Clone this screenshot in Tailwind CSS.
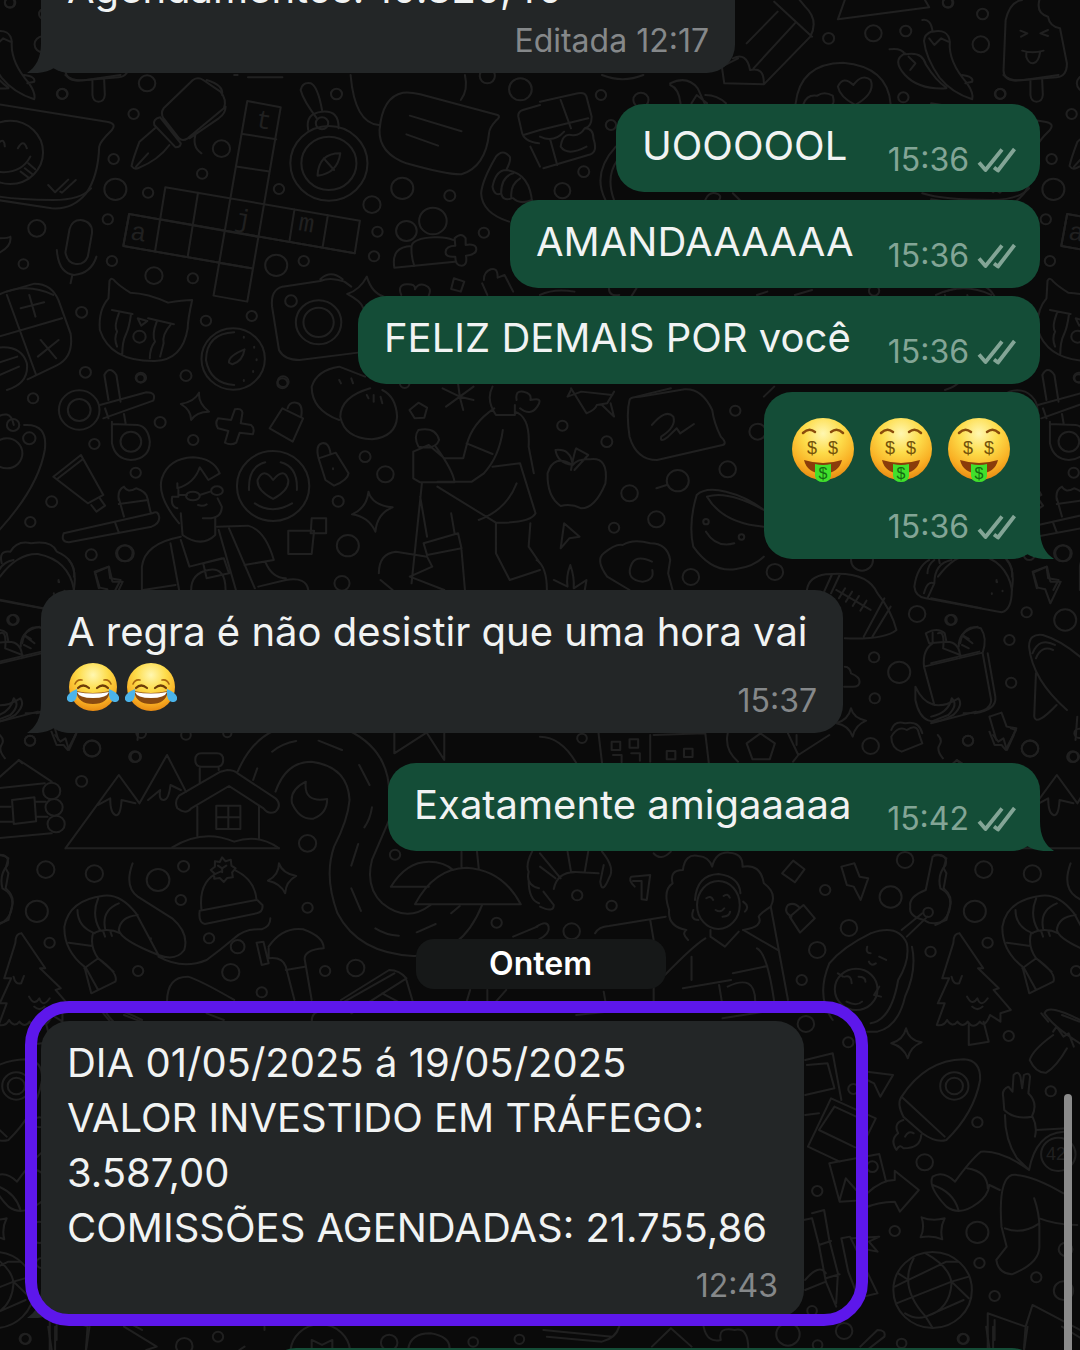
<!DOCTYPE html>
<html lang="pt-BR">
<head>
    <meta charset="UTF-8">
    <meta name="viewport" content="width=device-width, initial-scale=1.0">
    <title>Conversa</title>
    <script src="https://cdn.jsdelivr.net/npm/@tailwindcss/browser@4"></script>
</head>
<body class="bg-[#0a0a0a] font-['Inter','Liberation_Sans',sans-serif]">

    <!-- Shared icons -->
    <svg class="absolute w-0 h-0" aria-hidden="true">
        <defs>
            <radialGradient id="face" cx="50%" cy="25%" r="78%">
                <stop offset="0" stop-color="#fff7b0"/>
                <stop offset="0.4" stop-color="#fddc4a"/>
                <stop offset="0.75" stop-color="#f9b024"/>
                <stop offset="1" stop-color="#e58410"/>
            </radialGradient>
            <symbol id="checks" viewBox="0 0 39 26">
                <path d="M2 15.500L8.500 23 25 2.500M17 20.500L21 23.500 37.500 2" fill="none" stroke="currentColor" stroke-width="3.800" stroke-linejoin="round" stroke-linecap="butt"/>
            </symbol>
            <symbol id="tail-right" viewBox="-34 -32 48 32">
                <path d="M0-30C0-15 5-6 14 0C3 1-7-1-13-5C-18-2-24 0-33 0V-30Z" fill="currentColor"/>
            </symbol>
            <symbol id="tail-left" viewBox="-14 -32 48 32">
                <path d="M0-30C0-15-5-6-14 0C-3 1 7-1 13-5C18-2 24 0 33 0V-30Z" fill="currentColor"/>
            </symbol>
            <symbol id="money" viewBox="0 0 62 64">
                <circle cx="31" cy="31" r="31" fill="url(#face)"/>
                <path d="M11 15Q17 9 23 14M39 14Q45 9 51 15" fill="none" stroke="#8a4d0c" stroke-width="2.500" stroke-linecap="round"/>
                <g fill="#74520a" font-family="Liberation Sans" font-size="18" text-anchor="middle">
                    <text x="20" y="36">$</text>
                    <text x="41" y="36">$</text>
                </g>
                <path d="M12 42Q31 48 50 42Q47 55 31 56Q15 55 12 42Z" fill="#8a3c0b"/>
                <path d="M23 46Q31 48 39 46V58Q38 64 31 64T23 58Z" fill="#41e02c"/>
                <text x="31" y="61" fill="#146b12" font-family="Liberation Sans" font-size="16" text-anchor="middle">$</text>
            </symbol>
            <symbol id="joy" viewBox="0 0 52 48">
                <circle cx="26" cy="24" r="24" fill="url(#face)"/>
                <path d="M8 21Q10 16 15 17M37 17Q42 16 44 21" fill="none" stroke="#a9660f" stroke-width="1.600" stroke-linecap="round"/>
                <path d="M11 25Q16 20 22 25M30 25Q36 20 41 25" fill="none" stroke="#6e3d08" stroke-width="2.200" stroke-linecap="round"/>
                <path d="M9 28Q26 32 43 28Q41 41 26 41T9 28Z" fill="#8a4a10"/>
                <path d="M10 29Q26 32 42 29Q40 35 26 35T10 29Z" fill="#fff"/>
                <path d="M10 26Q11 38 5 39Q-1 39 0 34Q2 29 10 26ZM42 26Q41 38 47 39Q53 39 52 34Q50 29 42 26Z" fill="#4bb4ea"/>
            </symbol>
        </defs>
    </svg>

    <main class="relative h-screen overflow-hidden">

        <!-- Wallpaper -->
        <svg class="absolute inset-0 w-full h-full" fill="none" stroke="#202020" stroke-width="6" stroke-linejoin="round" stroke-linecap="round" aria-hidden="true">
            <g id="doodles">
                <g transform="scale(.3444 .3333)" data-dots="180,282,15 427,250,24 388,342,15 643,446,25 330,477,15 587,521,15 335,568,32 430,578,15 810,567,15 313,658,15 107,685,25 68,792,14 325,783,15 447,827,25 560,835,15 802,796,32 882,783,15 237,937,16 598,962,15 731,948,15 248,1117,16 409,1133,15 540,1127,16 822,1145,16 977,282,16 1080,614,25 1168,565,32 1306,587,16 1096,695,15 1086,769,15 1405,698,15 1511,268,33 28,8,14 1415,228,22 845,903,17">
                    <path d="M-20 310L310 365Q340 370 325 390Q290 425 288 440Q285 530 250 580Q210 630 150 625L-20 598M0 425q12-10 14 14M52 445q16-30 26 0M-10 515Q60 525 88 470M60 515l25 20M72 505l22 18M82 490l20 18M140 555l20 22 38-38M175 575l5 3 40-38"/>
                    <circle cx="30" cy="457" r="95"/>
                    <path d="M560 240Q575 230 590 240L640 275Q660 300 650 325L545 415Q530 425 520 415L475 355Q465 340 475 325ZM600 240q50 15 45 45M655 320q0 20-20 35l-85 60M465 352L525 430q0 12-15 12L448 375q-5-18 17-23M450 385L405 425Q385 480 382 498q8 12 20 6Q460 480 492 435M395 500l35-40M570 395q-15 45 15 65"/>
                    <path d="M718 303L815 322 718 905 620 887ZM705 402l97 16M690 500l88 14M640 790L730 805M480 562L1045 662 1030 760 375 642 358 738 730 805M480 562L450 755M575 578L545 770M855 628l-14 92M952 645l-15 95" fill="none"/>
                    <path d="M375 642L358 738 730 805M375 642L745 710M465 658L1030 760"/>
                    <circle cx="955" cy="490" r="112"/><circle cx="955" cy="490" r="80"/><circle cx="935" cy="370" r="18"/>
                    <path d="M895 390q-10-50 40-55t48 50M920 355Q880 300 873 270q5-25 30-20 20 10 32 80M988 460Q925 460 922 527Q980 520 988 460ZM940 475l30 35"/>
                    <path d="M1170 278Q1190 275 1220 283L1445 345Q1455 350 1440 362Q1420 385 1420 400Q1410 500 1340 523Q1300 525 1180 490Q1100 460 1102 390Q1110 290 1170 278ZM1190 347l150 47M1180 403l92 34M1018 225Q1030 370 1100 375M1350 225Q1360 270 1338 300"/>
                    <path d="M1568 315l-50 15q-15 5-13 20l10 45q5 30 50 35M1520 405l48-15M1540 440l28 60"/>
                    <path d="M1478 665Q1400 640 1397 580Q1400 540 1440 470q20-25 40 0 5 10-10 40q70 10 75 100M1430 560q10-50 40-50M1430 560q5 30 25 20 0-50 35-60M1455 580q5 25 30 15-5-40 25-60M1490 595q20 20 55 5"/>
                    <circle cx="1180" cy="693" r="30"/><circle cx="1257" cy="663" r="40"/>
                    <path d="M1145 803Q1135 740 1195 738Q1200 715 1260 712Q1295 710 1315 720M1195 738q-2 30 8 60M1145 803L1320 785M1320 715q20-20 32 0v20q30-5 31 12t-30 20q5 30-13 30t-18-27q-30 3-28-15t28-18z"/>
                    <path d="M235 660q35 5 32 40l-12 70q-10 25-35 22t-30-35l12-70q8-28 33-27zM165 750Q170 820 215 825Q265 820 280 770M210 825l-5 25M-5 715q30 0 35-5 5 30-35 50"/>
                    <path d="M318 842Q325 830 335 845Q350 860 378 878Q430 880 488 908Q530 900 558 900Q545 960 545 985Q530 1080 450 1083Q320 1085 290 990Q285 930 315 895ZM325 930l60 12M345 940q-15 40-5 55-10 20 0 45M380 945q-5 40-15 60t-10 60M430 955l75 18M455 965q-15 40-5 60-15 20-15 50M495 975q-25 30-20 55-5 20-10 40M400 955l28 8-18 14z"/>
                    <circle cx="405" cy="1010" r="18"/>
                    <path d="M20 875l80-24q50 0 70 50l35 100q10 70-40 95L80 1138M20 885l85 240M-20 1015L180 955M60 925l68-18M85 885l18 65M110 1070l60-50M118 1020l45 55M-20 1045Q60 1030 78 1090Q85 1150 20 1170M-10 1090l60-20M0 1125l55-25"/>
                    <circle cx="677" cy="1077" r="92"/>
                    <path d="M680 997Q600 1000 598 1080Q610 1150 680 1155M665 1088q-3-20 45-40-5 35-35 45zM708 1010v3M738 1040v3M745 1078v3M735 1113v3M708 1140v3"/>
                    <path d="M820 860L930 843Q960 830 1000 845L1020 860M930 838q30-30 65 0M820 860Q785 870 790 920L810 1050Q825 1080 870 1080L1040 1058M1115 890Q1080 880 1065 830Q1045 870 1008 882Q1050 905 1055 925"/>
                    <circle cx="925" cy="967" r="66"/><circle cx="925" cy="967" r="44"/>
                    <path d="M1165 885q-12-30 15-32t25 15q10-20 30-12t10 30M1318 835l30 10-10 30-28-8zM1405 840q0-25 20-32t20 25l20-8 25 50M1400 850l15 35M190 225q20 20 60 15l100-15M680 225h10M720 232h100"/>
                </g>
                <g transform="rotate(10 80 220)" fill="#202020" stroke="none" font-family="Liberation Mono" font-size="26">
                    <text x="132" y="230">a</text>
                    <text x="236" y="98">t</text>
                    <text x="233" y="199">j</text>
                    <text x="296" y="192">m</text>
                </g>
                <g transform="translate(540) scale(.3444 .3333)" data-dots="177,285,15 293,300,22 968,100,24 838,115,16 1062,93,16 1285,42,16 1280,133,24 1337,281,15 1055,292,15 127,515,16 65,572,23 206,375,15 1185,8,15 970,872,15">
                    <path d="M575 175L528 200 535 250 650 253 785 110Q810 60 770 20L750-5M680 5L790 110M560 175q40-20 50 35 40-10 40 38M620 205L740 70M600 130L690 35M885 0L865 58 1130 22 1115-5"/>
                    <path d="M742 312Q755 190 880 188Q1010 200 1018 312M915 315Q870 290 865 260q15-35 45-5 25-35 50-15 15 40-45 75zM765 312q10-30 40-25 20-15 45 0 5 20 0 25M378 250q50-25 80 15l20 45M378 255q25 10 30 55M440 310l15-25 30 25M480 285q35 0 60 25"/>
                    <path d="M1110 60q25-5 30 35 45-10 50 30-5 60 50 125 20 30 15 48-60-20-95-65-40-60-45-110 0-20 25-30M1130 115l15 20 20-20 20 10M1015 148q35-5 45 15 50-10 60 30 30 50 60 70M1060 160q-40 20 0 65 40 45 120 40M1070 170l20 20-15 20M1225 225q35 5 30 20l-20 5"/>
                    <path d="M1450 0q-10 40 25 50 5 30 35 35L1530 190Q1530 230 1500 232L1380 242Q1345 240 1346 210L1352 60Q1365 5 1400 0M1424 240v45q2 20 18 20t18-20l-2-48M1395 92l20 8-18 10M1475 90l-22 10 22 8M1400 152q30 10 62 0M1412 156v15q8 22 22 18t18-32"/>
                    <path d="M0 305L110 280q20-5 25 10L150 350q0 30-20 35 25 0 25 30 15 45-15 50L10 505M60 300l30 85M0 390l140-35M0 410q40 20 70-15M60 440q5-40 30-35t40-20M60 440q20 30 75 0M30 420l20 75M220 440Q150 520 190 600M225 480Q190 530 215 600M480 600q10-25 30-20t10 20M560 580l20 20M1110 580q60 20 200 20 80 0 110-35"/>
                    <path d="M180 225Q240 250 300 225M0 885q40-20 100-10M200 865q0 25 30 20M280 865l-15 25M630 885l30-10M740 885l50-15M1150 885q80-40 160 0M90 1170l-10 20 40-15 90 10M280 1190l100-25M650 1190l30-30"/>
                </g>
                <g transform="translate(0 380) scale(.3444 .3333)" data-dots="96,55,15 465,127,16 274,192,15 561,180,15 394,278,15 150,365,16 88,426,15 265,524,16 361,520,24 1060,230,16 1119,283,24 982,364,16 1010,497,32 993,610,22 36,720,15 820,10,15 38,135,18 85,175,18 408,-5,12 1175,10,14">
                    <circle cx="230" cy="90" r="59"/><circle cx="230" cy="90" r="33"/><circle cx="380" cy="185" r="30"/>
                    <path d="M303-15q15-30 35 0L350 65M303-15L315 60M325 125V190Q335 238 380 240Q435 235 435 185Q430 140 400 135L325 132M290 75L425 37q30 0 20 25L300 115M360 102l5 30M305 85l10 30"/>
                    <path d="M578 38Q575 70 607 95Q570 95 555 120Q555 90 525 72Q565 65 578 38ZM682 88q20-5 22 10l-5 32 30 5q12 10 5 28l-38-5-10 30q-15 10-33 0l10-35-30-8q-10-15 0-30l38 5z"/>
                    <path d="M820 85L880 115 850 185 783 145ZM835 85q5-20 25-17t15 40M925 235L975 218 1012 280Q1010 300 970 317L945 300ZM925 235q-10-40 10-45t25 32M967 265v3"/>
                    <path d="M1075 25Q990 50 988 110Q1000 175 1080 178Q1150 170 1153 110Q1150 50 1110 30M985 120Q905 90 905 20Q920-30 985-40L1060-10M1065 45l5 10M1085 45v20M1105 50l5 20M985 0l5 10M1020-5l5 15"/>
                    <path d="M-20 120q50-40 60 15M70 135Q140 130 130 210Q110 330-20 470"/><circle cx="20" cy="220" r="45"/>
                    <path d="M155 290L235 225 300 345 255 370ZM165 298l75-60M265 375l15 20 25-18-15-22M345 360q-5-30 15-40 10 20 35 5 30 10 33 30l10 45M345 355l15 55M345 372l85-12M185 460q-10 25 15 27L440 440q25-10 22-30t-20-10L185 460M335 430l10 28"/>
                    <circle cx="793" cy="318" r="105"/>
                    <path d="M793 357Q745 330 748 300Q765 260 793 300Q825 260 837 300Q840 330 793 357ZM723 330Q720 260 770 247M815 247Q865 260 862 330M740 370Q790 405 848 370"/>
                    <path d="M520 430Q455 350 470 295Q490 235 560 232Q620 235 638 280L605 300 580 262Q565 310 515 325V310M518 330V350M500 350q-5 30 15 35M500 350h18M518 345h25M580 345l30-10M632 355l12 25q0 35-40 35h-15M575 375q15 5 25-2M625 415v50q-40 40-95 0L525 400"/>
                    <ellipse cx="560" cy="348" rx="20" ry="13"/><ellipse cx="630" cy="332" rx="17" ry="13"/>
                    <path d="M412 630V560Q420 490 525 470M630 440L720 437Q770 450 795 540L710 555M635 450L685 630M525 480L550 560 645 535M495 490L520 630M665 445L740 625M590 550l60-15 15 45-65 15zM555 630q0-50 50-60t50 60M770 545q20 50 60 50M750 620l80-20q60-10 65 30M415 630l95-15"/>
                    <path d="M837 452H912L905 522H837ZM905 415h42v45h-45zM1070 335Q1080 375 1140 382Q1095 400 1090 455Q1070 410 1022 403Q1065 385 1070 335ZM275 575l40-15 5 35 30 5-15 30M275 575l12 50"/>
                    <path d="M0 590Q50 520 110 522Q200 540 215 630M5 550Q-5 510 30 515Q50 480 90 490Q150 480 165 515Q220 540 215 590M170 600v6M-20 655L125 685M-20 850L120 815M0 760q20-10 15 45l50 20M60 800q0-50 55-60M75 770l25 20M-20 1010q50-10 60-55 20 20-10 50l-50 20M-20 1030l130-35"/>
                    <path d="M1430 20q-20 40 10 85h55v-30M1435 85Q1370 130 1355 195L1345 235H1290L1245 195M1495 95Q1540 110 1535 200L1550 280M1355 190L1430 222M1460 150Q1450 230 1405 280L1370 305H1270M1430 260L1510 250 1555 400Q1540 430 1440 428L1270 320M1245 195l-45 20v80l20 12h100Q1315 270 1265 200M1215 150q50-10 60 30-10 30-60 20-15-30 0-50M1220 350L1240 470M1225 310L1195 610M1310 400L1320 460M1230 490L1330 460 1340 505 1240 525zM1340 510L1350 630M1440 430V520L1480 600 1568 570M1540 430L1535 500 1568 550M1100 580Q1100 520 1150 515L1240 530 1255 560 1190 590M1105 600l35 30M1190 590L1290 630M1390 420Q1470 390 1500 310M1500 60q-5-30 20-25t20 25q40-10 20 20t-50 5"/>
                    <path d="M1335 50l-50-25M1335 50l40-30M1335 50l-40 30M1335 50l10 40M1335 50l40 10M1335 50l-5-40M1215 68l25 15-8 30-28 2-15-25z"/>
                </g>
                <g transform="translate(540 380) scale(.3444 .3333)" data-dots="65,137,15 194,185,16 567,92,15 545,268,24 260,340,24 338,418,24 215,443,15 438,591,24 682,576,24 400,302,32 632,155,24 1520,520,24 1095,702,24 1195,719,15 1413,697,15 1525,720,32 1363,780,15 970,832,15 1043,877,32 1368,908,15 972,955,15 935,540,32">
                    <path d="M90 25l45 75q25-10 30-25l30-5 20-35M180 75l35 35-10-40M260 60Q250 100 260 170Q280 240 340 240L530 195Q545 190 525 170Q505 130 500 90Q470 25 420 28L290 50Q262 50 260 60M325 135q40-50 62-25 10 30-35 60-5 20 20 0l25-25 10 15 40-28"/>
                    <path d="M95 255Q40 220 22 280Q20 350 60 378Q90 370 120 385Q160 385 190 310Q200 230 145 238Q110 235 95 255zM90 270Q100 215 105 205l35 20-40 45M45 210q45-5 50 45Q50 250 45 210M338 325l30-10"/>
                    <path d="M650 390Q600 350 540 335Q480 320 455 345Q430 430 445 500Q500 580 570 567Q620 560 650 530M485 350Q530 430 650 440M485 350q60-20 165 40M482 455q30 50 82 35"/>
                    <circle cx="482" cy="425" r="8"/><circle cx="585" cy="471" r="8"/>
                    <path d="M70 430l45 40-30 5-25 30zM260 630L195 590Q160 540 185 520Q220 490 240 495Q270 475 320 490Q370 490 378 540L372 580 385 630M325 545q-50-25-62 15t35 45q35-5 28-35M40 600L80 620Q75 590 88 555Q100 590 98 625L135 600l-5 30M-10 540q30 20 30 90"/>
                    <path d="M775 630Q780 590 830 583Q950 570 980 640Q1020 690 1035 750Q1000 780 885 775M825 635l22-50M845 640l25-55M1000 655L940 770M1018 680L965 770M860 630l100 60M868 655l18-30M888 665l18-30M908 678l18-30M930 692l18-30"/>
                    <path d="M1130 540Q1095 560 1087 620Q1090 650 1120 655L1340 697Q1370 690 1370 630Q1380 570 1355 540M1115 640q10-40 30-30 0-60 50-70M1145 610l-20 45M1125 580q0-25 20-40M1327 605v2M1312 640v2M1343 632v2M1432 578l40-18 10 45h30l-30 65-15-42-22-5z"/>
                    <path d="M1115 860L1285 818 1310 960Q1310 1000 1230 1000M1145 975L1115 860Q1110 810 1140 790M1120 760q35-20 55 0l5 25-50 5zM1140 758v30M1180 785q40 0 40 50M1220 790q10-60 60-45 20 30 5 75M1225 765l20 12M1225 795l20 10M1090 920Q1130 1010 1215 955Q1230 975 1200 1005Q1110 1060 1090 960zM1300 820l22 130q5 40-60 50"/>
                    <path d="M1420 800Q1420 760 1460 765Q1510 780 1568 830M1420 800Q1430 900 1530 990M1440 880L1435 1010Q1440 1040 1500 975M1430 820q20-50 65-25M1440 835q15-40 50-25M1555 1080l5-70"/>
                    <path d="M903 985Q910 1015 947 1022Q915 1035 908 1070Q895 1035 860 1030Q895 1020 903 985ZM885 860q15 0 18 20 25 10 25 25t-20 15h-25M1020 1050q10-30 40-20 40-10 50 30M1305 1010l35-12 15 42 28 5-15 35M1305 1010l20 70"/>
                </g>
                <g transform="translate(0 720) scale(.3444 .3333)" data-dots="87,62,15 267,86,24 391,110,16 237,184,16 893,370,25 133,449,25 274,461,25 459,480,33 533,439,16 525,540,15 893,563,15 107,574,32 607,655,15 144,668,15 690,680,20 401,753,15 670,757,25 944,753,15 1033,744,25 760,817,15 1147,404,15 1442,608,15 150,213,25 157,262,25 163,312,25 540,45,14 410,40,14 660,40,12">
                    <path d="M0 170L55 120 150 185M-10 205L130 190M35 240l65-8 5 72-65 8zM-10 355L150 340M0 260h30M0 305h35M105 245h28M108 290h30M-10 405q40-5 32 30-25 30-15 70 40 20 25 70-10 30-40 40M160 45l15 20 15-10 10 35 20-45"/>
                    <path d="M190 385L345 165 405 250 485 105 540 215M285 255l35-20q0 45 15 50t18-45l40 10M430 240l35-30q-5 30 10 30t20-45l30 15M190 385H810"/>
                    <path d="M660 150Q680 150 690 160L800 235q20 20 0 40-20 10-35-10L665 198 555 265Q540 285 515 265q-10-20 5-38L640 155zM573 260v88M752 260v95M628 257h70v70h-70zM663 257v70M628 292h70M580 190V145M635 150v-8M585 100h45q18 0 18 20t-18 20h-45q-18 0-18-20t18-20M500 382Q590 325 680 365Q750 340 810 385"/>
                    <path d="M690 155Q730 60 800 30M1010 30Q1130 90 1130 220M800 215Q830 125 905 125Q1010 140 1015 240Q1010 300 970 380Q940 470 980 580Q1040 700 1200 708Q1340 710 1400 555M1130 300L1080 420Q1060 500 1110 550Q1180 610 1250 555M790 95q30-25 70-32M925 62l68 28M1043 135l30 60M1080 262q-5 35-22 60M1040 372l-20 65M1020 505l28 68M1090 625q30 20 68 22M1210 637l55-25M1310 580l25-22M735 180l12-35"/>
                    <path d="M888 185Q840 210 848 250Q870 300 910 296Q950 280 950 237Q880 250 888 185zM580 572L745 540M585 570Q575 480 640 455M685 452Q740 480 745 540M580 572q-5 35 15 40L745 580q20-5 17-25l-15-15M645 412l10 12 15-5 2 18 12 8-10 12 2 15-16 2-10 12-12-12-16 2v-16l-10-10 12-10v-16l14 2zM645 445l-12-8M645 445l12-8M645 445v12M810 430Q820 460 860 468Q830 485 828 520Q815 490 778 482Q810 465 810 430Z"/>
                    <path d="M385 430Q360 500 400 530L500 595Q550 640 535 690Q510 725 460 705Q350 660 345 630Q350 590 400 585M460 705L395 580Q350 520 300 527Q200 540 187 620Q185 690 245 740L265 820 335 785Q345 760 285 715Q260 680 270 640Q310 620 350 640M245 745l40-30M285 535q-20 50 5 95M225 570q0 50 50 70M200 668l68 10M345 550q-50 20-40 75M250 745l35 65M285 715l45 40M438 655v3M300 635l5 15M320 633l5 15M460 710Q530 750 600 720Q640 690 680 655Q710 625 760 628Q785 620 785 595"/>
                    <path d="M780 680Q820 620 880 628Q940 650 940 685Q880 690 885 720L905 840M780 685v30Q820 710 830 740L855 840M745 668l20-3 15 65-20 5zM830 750l55-10M990 840L1130 750q30 0 50 25L1020 880M1000 845L1145 760M1180 780l20 70M1110 820l45 25M485 845Q485 770 545 770Q580 780 680 840M300 880l20 25M360 885l50 20M600 880l50 20M905 905q0-30 25-30M1145 40l0 60 90-60M1290 40v80L1240 40"/>
                    <path d="M1135 500Q1180 425 1245 425Q1290 425 1315 450M1135 500H1245M1205 553Q1260 445 1355 443Q1460 450 1512 553zM1340 395v45M1385 395l5 50M1545 395q-20 40-10 60-10 40 30 50M1535 480q0 60 30 70M1490 650l70-30M1365 810l-10 35M1415 810v35M1470 810l-30 35"/>
                </g>
                <g transform="translate(540 720) scale(.3444 .3333)" data-dots="122,55,14 960,78,24 1243,62,15 1423,85,24 1550,110,15 108,526,15 208,557,15 92,634,24 828,510,15 1060,420,24 1018,531,32 897,624,24 805,690,24 1134,695,15 760,780,15 1127,577,14 772,912,24">
                    <path d="M0 50Q60 50 105 128M170 40l10 88M320 45v80M330 45L480 40 490 128M208 65h25v25h-25zM260 58h25v25h-25zM212 105h25v22M265 100h25v22M368 93h25v25h-25zM418 86h25v25h-25zM545 40q-10 50 30 85M600 70l40-30 42 30-15 48h-50zM720 40l30 65 90-60M750 105l-15 20M745 45v30M1020 50q20-35 45-20 30-20 35 10l10 30-60 25q-30-10-30-45M1155 45q15 15 5 30t10 40M1305 35l15 40h20l12 15 30-60-15-5M1210 120l10 10"/>
                    <path d="M430 660Q410 640 425 630Q370 620 375 570Q355 510 385 490Q375 450 415 450Q420 400 460 408Q490 410 500 440Q510 395 550 398Q590 400 588 440Q640 430 650 490Q690 520 670 560Q640 580 635 590Q650 620 590 630M450 540Q455 465 518 462Q580 470 582 520M445 570q-10 30 15 30M590 545q20 15 5 30M483 535q12-10 20 5M533 528q12-10 18 5M510 570q15 10 25-5M530 590q20 0 22-15"/>
                    <ellipse cx="518" cy="555" rx="62" ry="72"/>
                    <path d="M495 630v20l42 30 40-45M480 655Q440 680 330 800V845M440 710v70M590 630L690 690M630 685Q660 700 680 845M415 805L555 780M560 760l100-22M670 560L720 840M160 640Q170 620 200 618L365 590M320 600l10 60M520 795l8 50M545 800q80-40 80 45M185 815l5 30M530 895l120-20M105 885l90-10"/>
                    <path d="M0 400l60 75M80 395l10 60 80 5M140 395l-10 60M45 475L0 440M100 457q-50 0-60 50M180 395q40 50 20 80-20 50-25 10l10-50M0 560q40 20 40-5l-30-40M330 400q20 25 50-5M275 500q-20-20-10-30l55-5-10 75-15-2v-55h-25M-10 620q30-20 35 0t-30 40"/>
                    <path d="M735 422L768 448 740 487 703 460ZM725 590L765 555 798 595 755 638ZM730 590q-25-15-10-35 20-10 35 10M875 440l38-10 15 40 25 5-22 65-20-40-20-5z"/>
                    <path d="M1140 410q20-10 40 5l-8 30 8 15-8 45Q1200 530 1190 560L1180 600Q1140 620 1115 600Q1070 590 1075 560Q1070 530 1120 510zM1050 630l60-50M1065 650l60-60"/>
                    <path d="M960 640Q1040 610 1065 670Q1075 720 1040 780Q1020 900 960 910M960 640Q880 680 840 730Q800 830 850 900M1080 680Q1095 750 1060 830Q1040 920 980 935L950 935M950 680q-5 20 10 20M955 725q5 15 20 5M985 710l20 10M885 770q20-5 20 20M925 770q20 0 20 15M890 845q30 15 45 0M865 760l15 10M985 800l-15 25 20 5"/>
                    <circle cx="918" cy="808" r="62"/>
                    <path d="M1218 640Q1200 640 1200 670L1168 775h20L1155 850h20L1152 915q20 5 30-15 15 25 30 5 15 20 30 0 15 25 35 0 15 20 30-20l30 20v-25l30-10-50-60 15-5-60-60h15L1218 640M1195 770q5 25 22 20l8-22M1240 830q15 30 30 5 10 30 30 0M1255 860q15 15 30 0"/>
                </g>
                <g transform="translate(0 1000) scale(.3444 .3333)" data-dots="72,1016,15 633,1010,15 535,1038,24 1130,1028,24 1374,1026,14 1508,1018,14">
                    <path d="M140 980l10 70M160 980v70M260 980l-10 70M360 980l95 60-30 10M905 1050v-30l30 15 30-15v30M1185 1050Q1190 1000 1250 1000Q1310 1010 1305 1050M768 980v10M695 1050l15-10"/>
                    <circle cx="930" cy="1060" r="87"/>
                </g>
                <g transform="translate(540 1000) scale(.3444 .3333)" data-dots="895,127,15 1361,108,15 910,267,15 1483,274,15 1270,367,15 1117,487,24 805,573,15 1030,693,15 1270,697,32 1276,789,15 1320,888,15 1441,832,15 1230,1017,15 720,1003,34 883,993,24 965,500,16 790,932,14 1520,872,28 1526,748,20 1050,1030,14 806,1035,14">
                    <path d="M1465 40Q1475 10 1568 60M1465 40Q1490 80 1568 130M1490 105Q1430 150 1422 180Q1440 220 1470 218Q1500 200 1530 145M1490 95l10-15 20 30 15-10 15 40M1245 75v60l58-10-15-60M1063 85Q1070 120 1108 127Q1075 140 1068 175Q1055 140 1020 130Q1055 120 1063 85Z"/>
                    <path d="M1050 290Q1120 180 1230 178Q1280 180 1278 240Q1260 340 1180 420Q1150 430 1110 400L1055 350Q1035 310 1050 290L1175 410M1055 360q-30 10-15 40-25 20-5 50 10-20 20-5 50 0 52-40M1060 410q10-20 25-10"/>
                    <circle cx="1203" cy="258" r="41"/><circle cx="1203" cy="258" r="25"/>
                    <path d="M950 215L1025 225 988 290 970 250 950 240M770 180L850 160 875 300M775 195l60-5 20 75-85 20M770 345l40-5M845 295L975 355 930 450M845 295L778 440 870 485M855 320l-45 70 105 52M855 320l95 45-30 70M840 490L985 462 1005 545M840 490L870 605 915 602M870 600l18-65 30 35M950 580Q990 540 1030 540V512L1100 570 1045 635 1030 605Q980 605 940 625"/>
                    <path d="M790 640l35-10 15 90 25 100-5 90M765 660l25-5 20 80 20 110 30 75M810 735l35-12M830 835l40-12M875 715l25-5 80 170-40 10M875 715l20 100 30 80M770 840q40-50 60-20M770 870l60-25M905 715l80-5-30 15 25 30-50-10"/>
                    <path d="M1345 290q-5-20 15-30l12 15 3-50q15-15 20 5l5 35 5-40q15-10 18 5l-5 50q30 30 10 70-50 10-80-20zM1350 345Q1350 420 1385 475L1420 510M1430 350Q1445 380 1437 410M1440 390L1530 385M1420 510Q1440 400 1520 395M1420 510Q1340 450 1280 455Q1250 480 1205 545Q1170 510 1140 530Q1125 560 1180 620Q1220 650 1270 610Q1300 590 1305 555l30 15M1240 505q60 10 60 60M1140 555q60 20 75 75M1520 580Q1420 520 1370 525Q1330 540 1340 680L1355 740 1325 780Q1330 820 1370 823Q1450 790 1450 740V680Q1450 640 1435 595M1350 685q50 20 100-15M1450 655q50 20 110 20"/>
                    <circle cx="1505" cy="463" r="50"/>
                    <circle cx="1140" cy="870" r="114"/>
                    <path d="M1085 775Q1040 860 1120 950M1120 760Q1190 800 1195 850Q1190 930 1120 950M1070 840L1180 785 1215 785M1070 840l-30-20M1035 910L1195 845 1245 830M1195 845l50 50M1030 860l40-20M1060 940q30 20 60 10M1120 950l110-50M1120 950l20 34"/>
                    <path d="M1108 652Q1140 665 1175 655Q1160 685 1168 718Q1140 705 1105 712Q1118 685 1108 652ZM1300 940V1050M1300 940L1410 980 1430 915 1568 990M1410 980l-5 70M1320 960v60M475 980q10 50 50 40-10-40 40-30 40-10 40 60M325 1040l55-55 60 55M10 990l200 20M20 1010l160 15q40-10 50-45M930 1040L980 990q25 0 20 20l-50 40"/>
                </g>
                <text x="1046" y="1160" fill="#202020" stroke="none" font-family="Liberation Sans" font-size="18">42</text>
            </g>
            <use href="#doodles" x="938"/>
            <use href="#doodles" x="-938"/>
        </svg>

        <!-- Messages -->
        <div class="relative -mt-[53px] pl-[41px] pr-10 flex flex-col text-[40px] leading-[55px] text-[#f1f3f3]">

            <div class="self-start relative w-[694px] max-w-full px-[26px] pt-3.5 pb-[19px] bg-[#232627] rounded-[28px]">
                <p>Agendamentos: 10.820,40</p>
                <p class="mt-3 text-right text-[32px] leading-[26px] text-[#85888a]">Editada 12:17</p>
                <svg class="absolute bottom-0 -left-3.5 w-12 h-8 text-[#232627]" aria-hidden="true"><use href="#tail-left"/></svg>
            </div>

            <div class="mt-[31px] flex flex-col items-end gap-2">
                <div class="w-[424px] flex items-end justify-between pl-[26px] pr-6 pt-3.5 pb-[19px] bg-[#144d37] rounded-[28px]">
                    <p>UOOOOOL</p>
                    <p class="flex items-end gap-2 text-[32px] leading-[26px] text-[#83a596]">15:36 <svg class="w-[39px] h-[26px]" role="img" aria-label="Entregue"><use href="#checks"/></svg></p>
                </div>
                <div class="w-[530px] flex items-end justify-between pl-[26px] pr-6 pt-3.5 pb-[19px] bg-[#144d37] rounded-[28px]">
                    <p>AMANDAAAAAA</p>
                    <p class="flex items-end gap-2 text-[32px] leading-[26px] text-[#83a596]">15:36 <svg class="w-[39px] h-[26px]" role="img" aria-label="Entregue"><use href="#checks"/></svg></p>
                </div>
                <div class="w-[682px] flex items-end justify-between pl-[26px] pr-6 pt-3.5 pb-[19px] bg-[#144d37] rounded-[28px]">
                    <p>FELIZ DEMAIS POR você</p>
                    <p class="flex items-end gap-2 text-[32px] leading-[26px] text-[#83a596]">15:36 <svg class="w-[39px] h-[26px]" role="img" aria-label="Entregue"><use href="#checks"/></svg></p>
                </div>
                <div class="relative flex flex-col items-end pl-7 pr-6 pt-[26px] pb-[19px] bg-[#144d37] rounded-[28px]">
                    <div class="flex gap-4 pr-1.5">
                        <svg class="w-[62px] h-16" role="img" aria-label="🤑"><use href="#money"/></svg>
                        <svg class="w-[62px] h-16" role="img" aria-label="🤑"><use href="#money"/></svg>
                        <svg class="w-[62px] h-16" role="img" aria-label="🤑"><use href="#money"/></svg>
                    </div>
                    <p class="mt-8 flex items-end gap-2 text-[32px] leading-[26px] text-[#83a596]">15:36 <svg class="w-[39px] h-[26px]" role="img" aria-label="Entregue"><use href="#checks"/></svg></p>
                    <svg class="absolute bottom-0 -right-3.5 w-12 h-8 text-[#144d37]" aria-hidden="true"><use href="#tail-right"/></svg>
                </div>
            </div>

            <div class="self-start relative mt-[31px] w-[802px] max-w-full px-[26px] pt-3.5 pb-[19px] bg-[#232627] rounded-[28px]">
                <p>A regra é não desistir que uma hora vai</p>
                <div class="h-[55px] flex items-end justify-between">
                    <div class="self-center flex gap-1.5">
                        <svg class="w-[52px] h-12" role="img" aria-label="😂"><use href="#joy"/></svg>
                        <svg class="w-[52px] h-12" role="img" aria-label="😂"><use href="#joy"/></svg>
                    </div>
                    <p class="text-[32px] leading-[26px] text-[#85888a]">15:37</p>
                </div>
                <svg class="absolute bottom-0 -left-3.5 w-12 h-8 text-[#232627]" aria-hidden="true"><use href="#tail-left"/></svg>
            </div>

            <div class="self-end relative mt-[30px] w-[652px] flex items-end justify-between pl-[26px] pr-6 pt-3.5 pb-[19px] bg-[#144d37] rounded-[28px]">
                <p>Exatamente amigaaaaa</p>
                <p class="flex items-end gap-2 text-[32px] leading-[26px] text-[#83a596]">15:42 <svg class="w-[39px] h-[26px]" role="img" aria-label="Entregue"><use href="#checks"/></svg></p>
                <svg class="absolute bottom-0 -right-3.5 w-12 h-8 text-[#144d37]" aria-hidden="true"><use href="#tail-right"/></svg>
            </div>

            <h2 class="self-center mt-[88px] w-[250px] h-[50px] bg-[#161818] rounded-[18px] text-center text-[32px] leading-[50px] font-semibold text-white">Ontem</h2>

            <div class="self-start relative mt-8 w-[763px] max-w-full px-[26px] pt-3.5 pb-[19px] bg-[#232627] rounded-[28px]">
                <p>DIA 01/05/2025 á 19/05/2025<br>VALOR INVESTIDO EM TRÁFEGO:<br>3.587,00<br>COMISSÕES AGENDADAS: 21.755,86</p>
                <p class="mt-[18px] text-right text-[32px] leading-[26px] text-[#85888a]">12:43</p>
                <svg class="absolute bottom-0 -left-3.5 w-12 h-8 text-[#232627]" aria-hidden="true"><use href="#tail-left"/></svg>
                <!-- Highlight -->
                <div class="absolute -top-5 -bottom-2 -left-4 -right-16 border-12 border-[#5d17eb] rounded-[44px]"></div>
            </div>

            <div class="self-end mt-[30px] w-[772px] max-w-full h-22 bg-[#144d37] rounded-[28px]"></div>
        </div>

        <!-- Scroll thumb -->
        <div class="absolute right-2 top-[81%] bottom-0 w-2 bg-[#8b8b8b] rounded-t-full"></div>
    </main>

    <script>
        // Each doodle group lists its loose circles as "x,y,r"
        document.querySelectorAll('[data-dots]').forEach((group) => {
            group.dataset.dots.split(' ').forEach((dot) => {
                const [x, y, r] = dot.split(',');
                const circle = document.createElementNS('http://www.w3.org/2000/svg', 'circle');
                circle.setAttribute('cx', x);
                circle.setAttribute('cy', y);
                circle.setAttribute('r', r);
                group.appendChild(circle);
            });
        });
    </script>
</body>
</html>
